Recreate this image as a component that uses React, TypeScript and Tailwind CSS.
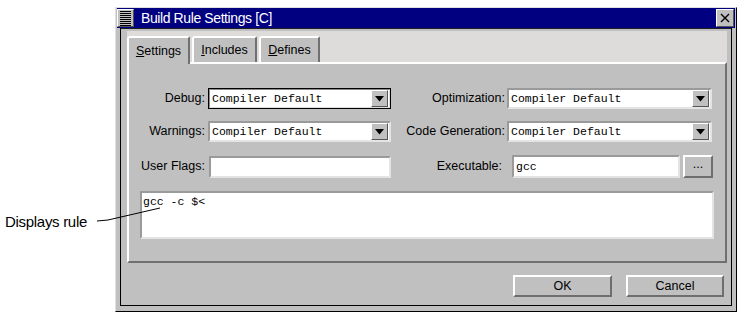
import React from 'react';

const sans = "font-['Liberation_Sans',Arial,sans-serif]";
const mono = "font-['Liberation_Mono','Courier_New',monospace]";

const Arrow = () => (
  <div className="w-[17px] h-[17px] bg-[#c0c0c0] border border-t-white border-l-white border-r-[#555] border-b-[#555] flex items-center justify-center shrink-0">
    <svg width="9" height="6" viewBox="0 0 9 6">
      <polygon points="0,0 9,0 4.5,5.5" fill="#000" />
    </svg>
  </div>
);

const Select = ({ width, focused }: { width: string; focused?: boolean }) => (
  <div className={`${width} h-[21px] shrink-0 ${focused ? 'border border-black' : ''}`}>
    <div
      className={`h-full bg-white flex items-center justify-between pl-[2px] pr-[1px] ${
        focused
          ? 'border border-t-[#8a8a8a] border-l-[#8a8a8a] border-r-[#dcdcdc] border-b-[#dcdcdc]'
          : 'border-2 border-t-[#9a9a9a] border-l-[#9a9a9a] border-r-[#e4e4e4] border-b-[#e4e4e4]'
      }`}
    >
      <span className={`${mono} text-[11.5px] text-black leading-none`}>Compiler Default</span>
      <Arrow />
    </div>
  </div>
);

const Label = ({ children, width }: { children: React.ReactNode; width: string }) => (
  <div className={`${width} shrink-0 text-right text-[12.5px] text-black ${sans}`}>{children}</div>
);

const Tab = ({ children, active, width }: { children: React.ReactNode; active?: boolean; width: string }) => (
  <div
    className={`${width} h-[26px] bg-[#c0c0c0] border-t-2 border-l-2 border-r-2 border-t-white border-l-white border-r-[#707070] rounded-tl-[3px] rounded-tr-[2px] flex items-center justify-center text-[12.5px] text-black ${sans} ${
      active ? 'relative z-10 h-[28px] -mb-[2px]' : ''
    }`}
  >
    {children}
  </div>
);

const RaisedButton = ({ children, width, height }: { children: React.ReactNode; width: string; height: string }) => (
  <div
    className={`${width} ${height} bg-[#c0c0c0] border-2 border-t-white border-l-white border-r-[#6e6e6e] border-b-[#6e6e6e] flex items-center justify-center text-[12.5px] text-black ${sans}`}
  >
    {children}
  </div>
);

export default function App() {
  return (
    <div className="relative w-[742px] h-[314px] bg-white flex overflow-hidden">
      <div className={`w-[115px] shrink-0 pt-[211px] pl-[5px] text-[15px] tracking-[-0.3px] text-black ${sans}`}>
        Displays rule
      </div>

      <div className="mt-[7px] w-[622px] h-[305px] flex flex-col bg-[#c0c0c0] border border-t-[#e0e0e0] border-l-[#e0e0e0] border-r-black border-b-black">
        {/* title bar */}
        <div className="mx-[1px] h-[20px] bg-[#000080] flex items-center shrink-0">
          <div className="w-[17px] h-[18px] bg-[#c0c0c0] border border-t-white border-l-white border-r-[#555] border-b-[#555] flex flex-col justify-center gap-[1px] px-[2px]">
            {Array.from({ length: 8 }).map((_, i) => (
              <div key={i} className="h-[1px] bg-black" />
            ))}
          </div>
          <div className={`ml-[7px] text-white text-[14px] tracking-[-0.4px] ${sans}`}>Build Rule Settings [C]</div>
          <div className="ml-auto mr-[1px] w-[18px] h-[18px] bg-[#c0c0c0] border border-t-white border-l-white border-r-[#555] border-b-[#555] flex items-center justify-center">
            <svg width="10" height="10" viewBox="0 0 10 10">
              <path d="M1 1 L9 9 M9 1 L1 9" stroke="#000" strokeWidth="1.4" />
            </svg>
          </div>
        </div>

        {/* content frame */}
        <div className="mx-[4px] mb-[5px] flex-1 flex flex-col border border-black border-t-[#202020]">
          <div className="ml-[6px] mr-[4px] mt-[2px] h-[232px] bg-[#dedbdb] flex flex-col">
            <div className="pt-[5px] flex items-end gap-[2px]">
              <Tab width="w-[63px]" active>
                <span>
                  <span className="underline">S</span>ettings
                </span>
              </Tab>
              <Tab width="w-[65px]">
                <span>
                  <span className="underline">I</span>ncludes
                </span>
              </Tab>
              <Tab width="w-[61px]">
                <span>
                  <span className="underline">D</span>efines
                </span>
              </Tab>
            </div>

            <div className="flex-1 bg-[#c0c0c0] border-2 border-t-white border-l-white border-r-[#707070] border-b-[#707070] pt-[24px] pl-[11px] pr-[11px] flex flex-col">
              <div className="flex items-center h-[21px]">
                <Label width="w-[65px]">Debug:</Label>
                <div className="w-[3px]" />
                <Select width="w-[183px]" focused />
                <Label width="w-[114px]">Optimization:</Label>
                <div className="w-[2px]" />
                <Select width="w-[205px]" />
              </div>

              <div className="flex items-center h-[21px] mt-[12px]">
                <Label width="w-[65px]">Warnings:</Label>
                <div className="w-[3px]" />
                <Select width="w-[183px]" />
                <Label width="w-[114px]">Code Generation:</Label>
                <div className="w-[2px]" />
                <Select width="w-[205px]" />
              </div>

              <div className="flex items-center h-[23px] mt-[13px]">
                <Label width="w-[65px]">User Flags:</Label>
                <div className="w-[4px]" />
                <div className="w-[182px] h-[22px] bg-white border-2 border-t-[#9a9a9a] border-l-[#9a9a9a] border-r-[#e4e4e4] border-b-[#e4e4e4]" />
                <Label width="w-[111px]">Executable:</Label>
                <div className="w-[10px]" />
                <div className="w-[168px] h-[23px] bg-white border-2 border-t-[#9a9a9a] border-l-[#9a9a9a] border-r-[#e4e4e4] border-b-[#e4e4e4] flex items-center pl-[2px]">
                  <span className={`${mono} text-[11.5px] leading-none text-black`}>gcc</span>
                </div>
                <div className="w-[3px]" />
                <RaisedButton width="w-[30px]" height="h-[23px]">
                  <span className="-mt-[4px]">...</span>
                </RaisedButton>
              </div>

              <div className="mt-[13px] h-[48px] bg-white border-2 border-t-[#9a9a9a] border-l-[#9a9a9a] border-r-[#e4e4e4] border-b-[#e4e4e4] pl-[1px] pt-[3px]">
                <div className={`${mono} text-[11.5px] leading-[12px] text-black`}>gcc -c $&lt;</div>
              </div>
            </div>
          </div>

          <div className="flex-1 flex justify-end items-start pt-[12px] pr-[7px] gap-[14px]">
            <RaisedButton width="w-[99px]" height="h-[22px]">OK</RaisedButton>
            <RaisedButton width="w-[98px]" height="h-[22px]">Cancel</RaisedButton>
          </div>
        </div>
      </div>

      {/* annotation leader line */}
      <svg className="absolute left-0 top-0 pointer-events-none" width="742" height="314">
        <polyline points="97,221 108,220 160,208" fill="none" stroke="#000" strokeWidth="1" />
      </svg>
    </div>
  );
}
